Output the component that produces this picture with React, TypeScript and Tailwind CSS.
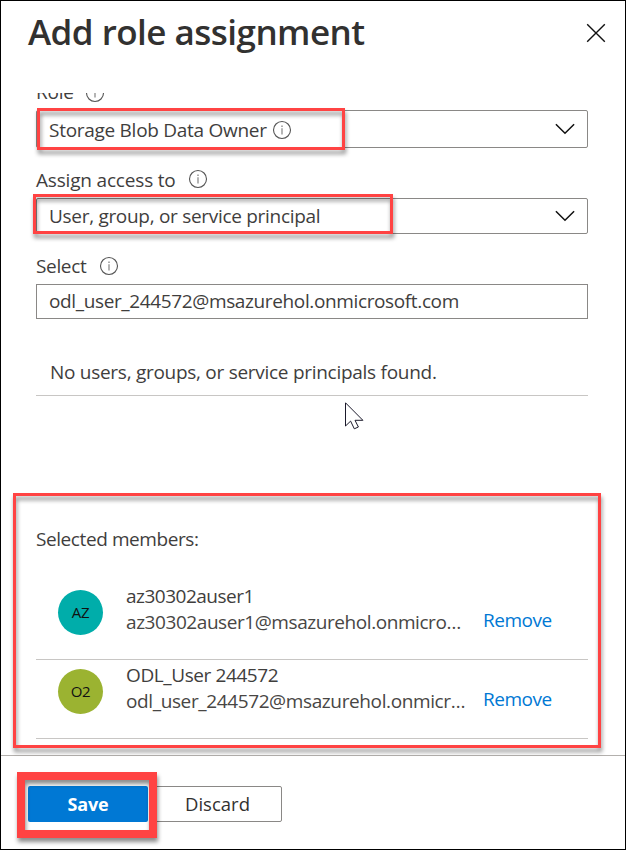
import type { ReactNode } from "react";

function InfoIcon() {
  return (
    <svg width="20" height="20" viewBox="0 0 20 20" fill="none" className="shrink-0">
      <circle cx="10" cy="10" r="8.5" stroke="#555" strokeWidth="1.1" />
      <path d="M10 8.3V14.4" stroke="#777" strokeWidth="1.1" />
      <path d="M10 5.6V7" stroke="#777" strokeWidth="1.2" />
    </svg>
  );
}

function Chevron() {
  return (
    <svg width="20" height="12" viewBox="0 0 20 12" fill="none" className="shrink-0">
      <path d="M0.9 1.2L10 10.3L19.1 1.2" stroke="#111" strokeWidth="1.5" />
    </svg>
  );
}

function Highlight({ className }: { className: string }) {
  return (
    <div
      className={`pointer-events-none absolute border-[#ff4343] drop-shadow-[1px_4px_2px_rgba(0,0,0,0.45)] ${className}`}
    />
  );
}

function Label({ children, className }: { children: ReactNode; className: string }) {
  return <span className={`whitespace-pre ${className}`}>{children}</span>;
}

type MemberProps = {
  initials: string;
  color: string;
  name: string;
  nameClass: string;
  email: string;
  emailClass: string;
};

function Member({ initials, color, name, nameClass, email, emailClass }: MemberProps) {
  return (
    <div className="flex h-[79px] border-b border-[#c8c6c4] pl-[22px]">
      <div
        className={`mt-[9px] flex size-[45px] shrink-0 items-center justify-center rounded-full pb-[2px] text-[15px] leading-5 tracking-[-0.3px] text-[#111] ${color}`}
      >
        {initials}
      </div>
      <div className="ml-[23px] flex w-[357px] shrink-0 flex-col pt-[2px] leading-[26px]">
        <Label className={nameClass}>{name}</Label>
        <Label className={`text-[#484644] ${emailClass}`}>{email}</Label>
      </div>
      <a className="pt-[26px] leading-[26px] tracking-[-0.5px] text-[#0078d4]">Remove</a>
    </div>
  );
}

export default function App() {
  return (
    <div className="relative flex h-[850px] w-[626px] flex-col overflow-hidden border border-black bg-white font-['Open_Sans','Noto_Sans',sans-serif] text-[19px] text-[#3f3e3d]">
      <header className="flex h-[92px] shrink-0 items-start justify-between pl-[27px] pr-[19px]">
        <h1 className="mt-[7px] whitespace-pre text-[35px] leading-[48px] font-semibold tracking-[-0.53px] text-[#323130]">
          Add role assignment
        </h1>
        <svg width="20" height="20" viewBox="0 0 20 20" fill="none" className="mt-[22px]">
          <path d="M1.2 1.2L18.8 18.8M18.8 1.2L1.2 18.8" stroke="#111" strokeWidth="1.4" />
        </svg>
      </header>

      <main className="flex h-[661px] shrink-0 flex-col overflow-hidden pl-[35px] pr-[37px]">
        <div className="-mt-[14px] flex h-[31px] shrink-0 items-start">
          <Label className="w-[49px] leading-[26px] tracking-[-0.25px]">Role</Label>
          <div className="mt-[3.5px]">
            <InfoIcon />
          </div>
        </div>
        <div className="flex h-[38px] shrink-0 items-center justify-between rounded-[2px] border border-[#8a8886] pr-[12px] pl-[12px]">
          <div className="flex items-center gap-[5.5px] pt-[2px]">
            <Label className="leading-[26px] tracking-[-0.28px]">Storage Blob Data Owner</Label>
            <InfoIcon />
          </div>
          <Chevron />
        </div>

        <div className="flex h-[50px] shrink-0 items-start pt-[19px]">
          <Label className="w-[152px] leading-[26px] tracking-[-0.18px]">Assign access to</Label>
          <div className="mt-[2px]">
            <InfoIcon />
          </div>
        </div>
        <div className="flex h-[36px] shrink-0 items-center justify-between rounded-[2px] border border-[#8a8886] pr-[12px] pl-[12px]">
          <Label className="leading-[26px] tracking-[-0.3px]">User, group, or service principal</Label>
          <Chevron />
        </div>

        <div className="flex h-[50px] shrink-0 items-start pt-[19px]">
          <Label className="w-[63px] leading-[26px] tracking-[-0.35px]">Select</Label>
          <div className="mt-[3px]">
            <InfoIcon />
          </div>
        </div>
        <div className="flex h-[35px] shrink-0 items-center border border-[#8a8886] pb-[2px] pl-[12px]">
          <Label className="leading-[26px] tracking-[-0.37px]">
            odl_user_244572@msazurehol.onmicrosoft.com
          </Label>
        </div>

        <div className="mt-[39px] h-[38px] shrink-0 border-b border-[#c8c6c4] pl-[14px]">
          <Label className="leading-[26px] tracking-[-0.28px]">
            No users, groups, or service principals found.
          </Label>
        </div>

        <Label className="mt-[130px] leading-[26px] tracking-[-0.42px]">Selected members:</Label>
        <div className="mt-[29px] flex flex-col">
          <Member
            initials="AZ"
            color="bg-[#00adaa]"
            name="az30302auser1"
            nameClass="tracking-[-0.5px]"
            email="az30302auser1@msazurehol.onmicro…"
            emailClass="tracking-[-0.43px]"
          />
          <Member
            initials="O2"
            color="bg-[#9bb331]"
            name="ODL_User 244572"
            nameClass="tracking-[-0.4px]"
            email="odl_user_244572@msazurehol.onmicr…"
            emailClass="tracking-[-0.38px]"
          />
        </div>
      </main>

      <footer className="mt-px flex flex-1 items-start gap-[5px] border-t border-[#b3b0ad] pt-[30px] pl-[27px]">
        <button className="h-[36px] w-[120px] rounded-[2px] bg-[#0078d4] text-[18px] leading-[26px] font-bold tracking-[-0.2px] text-white">
          Save
        </button>
        <button className="h-[36px] w-[129px] rounded-[2px] border border-[#8a8886] text-[18.5px] leading-[26px] font-medium text-[#323130]">
          Discard
        </button>
      </footer>

      <Highlight className="top-[107px] left-[36px] h-[42px] w-[308px] border-[3px]" />
      <Highlight className="top-[193px] left-[32px] h-[40px] w-[360px] border-[3px]" />
      <Highlight className="top-[492px] left-[12px] h-[255px] w-[588px] border-[3px]" />
      <Highlight className="top-[771px] left-[16px] h-[66px] w-[140px] border-8" />

      <svg width="19" height="28" viewBox="0 0 19 28" className="absolute top-[401px] left-[344px]">
        <path
          d="M0.5 0.8V24L5.6 19.1L9.3 26.8L13.4 25L10 18.3H17.9Z"
          fill="white"
          stroke="#1b1a2b"
          strokeWidth="1"
        />
      </svg>
    </div>
  );
}
